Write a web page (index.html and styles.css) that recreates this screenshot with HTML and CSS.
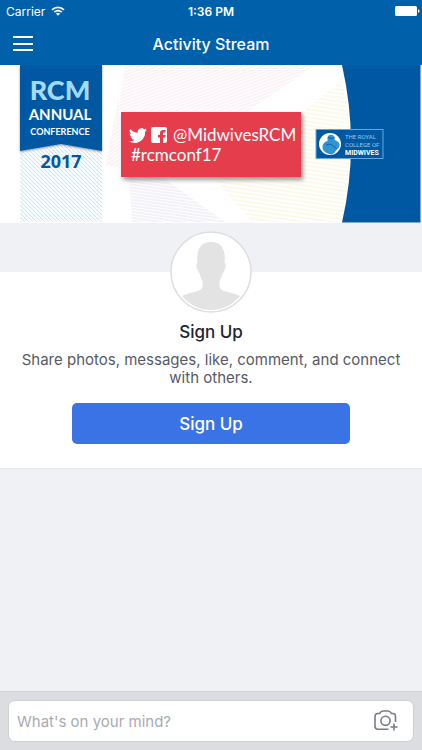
FILE: index.html
```html
<!DOCTYPE html>
<html lang="en">
  <head>
    <meta charset="UTF-8" />
    <meta name="viewport" content="width=device-width, initial-scale=1.0" />
    <title>Activity Stream</title>
    <link rel="stylesheet" href="styles.css">
  </head>

  <body>
    <header class="top-bar">
      <div class="status">
        <div class="carrier">
          <span>Carrier</span>
          <svg width="14" height="10" viewBox="0 0 14 10" fill="none" stroke="#fff" stroke-width="1.7">
            <path d="M1 3.9a8.6 8.6 0 0 1 12 0M3.3 6.2a5.3 5.3 0 0 1 7.4 0" />
            <path d="M7 9.8 4.9 7.7a3 3 0 0 1 4.2 0z" fill="#fff" stroke="none" />
          </svg>
        </div>
        <span class="time">1:36 PM</span>
        <svg class="battery" width="25" height="10" viewBox="0 0 25 10" fill="#fff">
          <rect width="22" height="10" rx="1.5" />
          <path d="M23 3.2q1.6.4 1.6 1.8T23 6.8z" />
        </svg>
      </div>
      <nav class="nav">
        <button class="menu" type="button" aria-label="Menu">
          <svg width="22" height="16" viewBox="0 0 22 16" stroke="#fff" stroke-width="2">
            <path d="M1 1h20M1 8h20M1 14h20" />
          </svg>
        </button>
        <h1>Activity Stream</h1>
      </nav>
    </header>

    <main>
      <svg class="banner" viewBox="0 0 422 158">
        <defs>
          <pattern id="dots" width="4" height="4" patternUnits="userSpaceOnUse">
            <path d="M0 0l4 4" stroke="#c9eaf8" stroke-width="1.2" />
          </pattern>
          <pattern id="purple" width="8" height="3" patternUnits="userSpaceOnUse" patternTransform="rotate(8)">
            <path d="M0 1h8" stroke="#e2ddee" stroke-width=".8" />
          </pattern>
          <pattern id="pink" width="8" height="3" patternUnits="userSpaceOnUse" patternTransform="rotate(-20)">
            <path d="M0 1h8" stroke="#f3dfeb" stroke-width=".8" />
          </pattern>
          <pattern id="rose" width="8" height="3" patternUnits="userSpaceOnUse" patternTransform="rotate(-34)">
            <path d="M0 1h8" stroke="#fadce2" stroke-width=".8" />
          </pattern>
          <pattern id="yellow" width="8" height="4" patternUnits="userSpaceOnUse" patternTransform="rotate(8)">
            <path d="M0 1h8" stroke="#f8f5d4" stroke-width="1" />
          </pattern>
          <filter id="shadow" x="-10%" y="-10%" width="125%" height="135%">
            <feDropShadow dx="2" dy="3" stdDeviation="2" flood-opacity=".4" />
          </filter>
          <filter id="ribbon-shadow" x="-10%" y="-10%" width="120%" height="120%">
            <feDropShadow dx="0" dy="1" stdDeviation="1" flood-opacity=".4" />
          </filter>
        </defs>
        <rect width="422" height="158" fill="#fff" />

        <path d="M125 0h190l-67 46H119z" fill="url(#pink)" />
        <path d="M119 30v72l-13-2 13-70z" fill="url(#rose)" />
        <path d="M129 110h30l66 47h-93z" fill="url(#purple)" />
        <path d="M342 15q18 70 0 142h-90l-40-46h89V48z" fill="url(#yellow)" />

        <rect x="20" width="82" height="157" fill="url(#dots)" />
        <path d="M20 0h82v86l-41-7-41 7z" fill="#0158a2" filter="url(#ribbon-shadow)" />
        <g class="ribbon-text">
          <text class="rcm" x="60" y="35">RCM</text>
          <text class="annual" x="60" y="55">ANNUAL</text>
          <text class="conference" x="60" y="70">CONFERENCE</text>
          <text class="year" x="61" y="103">2017</text>
        </g>

        <rect x="121" y="47" width="180" height="65" fill="#e63e4d" filter="url(#shadow)" />
        <path transform="translate(129 63) scale(.75)" fill="#fff" d="M24 2.6a10 10 0 0 1-2.8.8 5 5 0 0 0 2.1-2.7 10 10 0 0 1-3.1 1.2 4.9 4.9 0 0 0-8.4 4.5A14 14 0 0 1 1.7 1.3a4.9 4.9 0 0 0 1.5 6.5 5 5 0 0 1-2.2-.6 4.9 4.9 0 0 0 3.9 4.9 5 5 0 0 1-2.2.1 4.9 4.9 0 0 0 4.6 3.4A10 10 0 0 1 0 17.6a14 14 0 0 0 21.5-12.5A10 10 0 0 0 24 2.6z" />
        <path fill="#fff" d="M153 62h12q2 0 2 2v12q0 2-2 2h-2v-5.5h2.5V70H163v-1.500q0-1 1-1h1.500V65H163q-3 0-3 3v2h-2v2.500h2V78h-7q-2 0-2-2V64q0-2 2-2z" />
        <g class="tags">
          <text x="173" y="76">@MidwivesRCM</text>
          <text x="131" y="96">#rcmconf17</text>
        </g>

        <path d="M342 0h78.500v157.500H342q18-78 0-157.500z" fill="#0158a2" />
        <rect x="316" y="64.500" width="67" height="29" fill="#0158a2" stroke="#65a9dc" />
        <circle cx="330" cy="79" r="11" fill="#fff" />
        <path d="M327.5 72a3.8 3.8 0 0 1 7 0l.2 3q4.5 1.500 5 5-.5 3-3 4.500-2 4-5 5-7-1-8.700-5-1.500-3.500 1-6.500 1-1.500 3.500-2z" fill="#2f93d4" />
        <path d="M328 72.5q4 2.500 6.500 0M326 80q5-2 7 1l4 3" fill="none" stroke="#0158a2" stroke-width=".8" />
        <g class="college">
          <text x="345" y="74">THE ROYAL</text>
          <text x="345" y="82">COLLEGE OF</text>
          <text class="midwives" x="345" y="90">MIDWIVES</text>
        </g>
      </svg>

      <section class="signup">
        <svg class="avatar" width="82" height="82" viewBox="0 0 82 82">
          <circle cx="41" cy="41" r="40" fill="#fff" stroke="#dedee0" stroke-width="1.5" />
          <path fill="#e3e3e3" d="M12 65q4-2 16-5 5-2 4.500-6v-4q-2-3-3-8-2-1-3-6-.5-4 1-4.500C26 18 31 11 41 11s15 7 13.500 20.500q1.500.5 1 4.500-1 5-3 6-1 5-3 8v4q-.5 4 4.500 6 12 3 16 5Q58 79 41 79T12 65z" />
        </svg>
        <h2>Sign Up</h2>
        <p>Share photos, messages, like, comment, and connect with others.</p>
        <button class="signup-button" type="button">Sign Up</button>
      </section>
    </main>

    <form class="composer">
      <div class="field">
        <input type="text" aria-label="Post" placeholder="What's on your mind?" />
        <button class="camera" type="button" aria-label="Add photo">
          <svg width="24" height="22" viewBox="0 0 24 22" fill="none" stroke="#797d88" stroke-width="1.6">
            <path d="M14.5 19.2H4q-3 0-3-3V6.500q0-3 3-3h1.500Q7 1 9 1h5q2 0 3.500 2.500H19q2.500 0 2.500 3V12" />
            <circle cx="11.5" cy="10.8" r="4.6" />
            <path d="M20 13.5v7M16.5 17h7" />
          </svg>
        </button>
      </div>
    </form>
  </body>
</html>
```
FILE: styles.css
```css
* {
  box-sizing: border-box;
}

body {
  margin: 0;
  min-height: 100vh;
  display: flex;
  flex-direction: column;
  background-color: #f0f1f5;
  font-family: Inter, "Liberation Sans", sans-serif;
  color: #22242f;
}

button {
  padding: 0;
  border: none;
  background: none;
  font-family: inherit;
  cursor: pointer;
}

svg {
  display: block;
}

.top-bar {
  height: 65px;
  background-color: #0060aa;
  color: white;
}

.status {
  display: grid;
  grid-template-columns: 1fr auto 1fr;
  align-items: center;
  height: 22px;
  padding: 0 6px;
  font-size: 12px;
}

.carrier {
  display: flex;
  align-items: center;
  gap: 6px;
}

.time {
  font-weight: 600;
}

.battery {
  justify-self: end;
  margin-right: -4px;
}

.nav {
  display: grid;
  grid-template-columns: 40px 1fr 40px;
  align-items: center;
  height: 43px;
}

.menu {
  justify-self: end;
  margin-right: 6px;
}

h1 {
  margin: 0;
  font-size: 16px;
  font-weight: 500;
  text-align: center;
}

main {
  flex: 1;
}

.banner {
  width: 100%;
  height: auto;
}

.ribbon-text {
  fill: white;
  font-family: Lato, "Open Sans", sans-serif;
  font-weight: bold;
  text-anchor: middle;
}

.rcm {
  fill: #a3dafa;
  font-size: 27px;
  font-weight: 900;
}

.annual {
  font-size: 15px;
}

.conference {
  font-size: 9px;
}

.year {
  fill: #0158a2;
  font-family: "Open Sans", sans-serif;
  font-size: 18px;
}

.tags {
  fill: white;
  font-family: Lato, sans-serif;
  font-size: 17px;
}

.college {
  fill: #8fcbf2;
  font-family: Roboto, sans-serif;
  font-size: 6px;
}

.midwives {
  fill: white;
  font-size: 7px;
  font-weight: bold;
}

.signup {
  display: flex;
  flex-direction: column;
  align-items: center;
  margin-top: 49px;
  padding: 0 20px 24px;
  background-color: white;
  border-bottom: 1px solid #e6e6ea;
  text-align: center;
}

.avatar {
  margin-top: -41px;
}

h2 {
  margin: 8px 0;
  font-size: 17px;
  line-height: 22px;
  font-weight: 500;
}

p {
  margin: 0 0 16px;
  font-size: 15px;
  line-height: 18px;
  color: #565a66;
}

.signup-button {
  width: 66vw;
  height: 41px;
  border-radius: 5px;
  background-color: #3a73e6;
  color: white;
  font-size: 17px;
  font-weight: 500;
}

.composer {
  padding: 8px;
  background-color: #dcdde0;
  border-top: 1px solid #cfd0d4;
}

.field {
  display: flex;
  align-items: center;
  height: 42px;
  padding: 0 15px 0 8px;
  border: 1px solid #d0d1d5;
  border-radius: 7px;
  background-color: white;
}

.field input {
  flex: 1;
  min-width: 0;
  padding: 0;
  border: none;
  outline: none;
  font-family: inherit;
  font-size: 15px;
}

.field input::placeholder {
  color: #a9abb1;
}
```
